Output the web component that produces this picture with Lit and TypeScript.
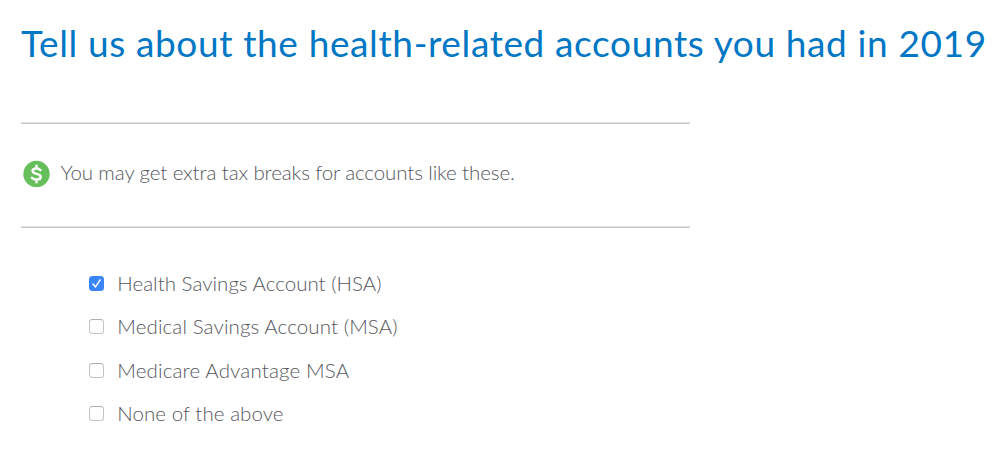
import { LitElement, html, css, svg } from "lit";
import { customElement, property } from "lit/decorators.js";

@customElement("option-row")
class OptionRow extends LitElement {
  @property() label = "";
  @property({ type: Boolean }) checked = false;
  @property({ type: Number }) tracking = 0;

  static styles = css`
    :host { display: flex; align-items: center; height: 43.3px; }
    .box {
      box-sizing: border-box; width: 15px; height: 15px; flex: none;
      border: 1px solid #c4c4c6; border-top-color: #adadaf; border-radius: 3.5px; background: #fff;
    }
    .box.on { border: 0; background: #3a85f8; }
    svg { display: block; width: 15px; height: 15px; }
    .label {
      margin: 0 0 1px 13.3px; font: 300 20.5px/28px Lato, sans-serif;
      color: #56575d; white-space: nowrap;
    }
  `;

  render() {
    return html`
      <div class="box ${this.checked ? "on" : ""}">
        ${this.checked
          ? html`<svg viewBox="0 0 15 15">${svg`<path d="M4 8 L6.5 10.9 L11.2 3.8" fill="none" stroke="#fff" stroke-width="1.5" stroke-linecap="round" stroke-linejoin="round"/>`}</svg>`
          : ""}
      </div>
      <span class="label" style="letter-spacing:${this.tracking}px">${this.label}</span>
    `;
  }
}

@customElement("app-root")
class AppRoot extends LitElement {
  static styles = css`
    :host {
      display: block; box-sizing: border-box; width: 999px; height: 452px; overflow: hidden;
      padding: 19px 0 0 21px; background: #fff; font-family: Lato, sans-serif;
    }
    h1 {
      margin: 0; height: 103px; font: 400 37px/48px Lato, sans-serif;
      letter-spacing: 0.63px; color: #0077c5; white-space: nowrap;
    }
    .notice {
      box-sizing: border-box; width: 669px; height: 106px; padding-bottom: 2px;
      display: flex; align-items: center; background:
        linear-gradient(#e0e0e0 50%, #c9c9c9 50%) top / 100% 2px no-repeat,
        linear-gradient(#e0e0e0 50%, #c9c9c9 50%) bottom / 100% 2px no-repeat;
    }
    .coin { width: 28px; height: 28px; margin: 0 9.5px 0 2px; flex: none; }
    .notice span {
      margin-bottom: 4px; font: 300 20.5px/28px Lato, sans-serif; letter-spacing: -0.11px;
      color: #56575d; white-space: nowrap;
    }
    .options { padding: 34px 0 0 68px; }
  `;

  private options = [
    { label: "Health Savings Account (HSA)", checked: true, tracking: 0.02 },
    { label: "Medical Savings Account (MSA)", checked: false, tracking: 0.11 },
    { label: "Medicare Advantage MSA", checked: false, tracking: 0.15 },
    { label: "None of the above", checked: false, tracking: 0.06 },
  ];

  render() {
    return html`
      <h1>Tell us about the health-related accounts you had in 2019</h1>
      <div class="notice">
        <svg class="coin" viewBox="0 0 28 28">
          <circle cx="13.5" cy="14" r="13.2" fill="#67bf5c"/>
          <path d="M17.4 10.1 C16.5 9.1 15.2 8.6 13.5 8.6 C11.2 8.6 9.6 9.5 9.6 11.1 C9.6 12.9 11.2 13.4 13.5 13.9 C16 14.4 17.7 15.1 17.7 16.9 C17.7 18.6 15.9 19.5 13.6 19.5 C11.5 19.5 9.9 18.9 8.9 17.8 M13.5 5.8 V8.6 M13.5 19.5 V22.3"
            fill="none" stroke="#fff" stroke-width="2.5" stroke-linecap="round"/>
        </svg>
        <span>You may get extra tax breaks for accounts like these.</span>
      </div>
      <div class="options">
        ${this.options.map(
          (o) => html`<option-row .label=${o.label} .checked=${o.checked} .tracking=${o.tracking}></option-row>`
        )}
      </div>
    `;
  }
}
